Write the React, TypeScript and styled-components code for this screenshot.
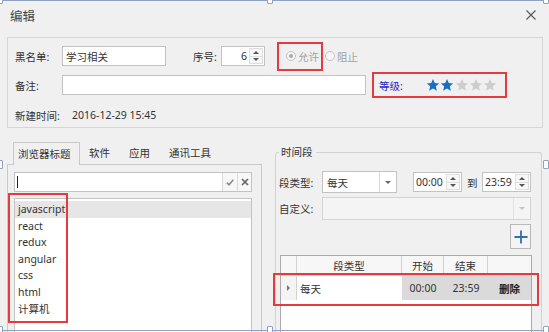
import React from "react";
import styled, { createGlobalStyle } from "styled-components";

const Global = createGlobalStyle`
  html, body { margin: 0; padding: 0; background: #f0f0f0; }
  body {
    font-family: "Noto Sans", "Noto Sans CJK SC", sans-serif;
    font-size: 10.5px;
    color: #333;
  }
  * { box-sizing: border-box; }
`;

const Window = styled.div`
  position: relative;
  width: 549px;
  height: 332px;
  overflow: hidden;
  background: #f0f0f0;
  display: flex;
  flex-direction: column;
`;

const TitleBar = styled.div`
  height: 30px;
  flex-shrink: 0;
  display: flex;
  align-items: center;
  justify-content: space-between;
  padding: 0 13px 0 10px;
`;

const Title = styled.span`
  font-size: 12.5px;
  color: #444;
`;

const TopGroup = styled.div`
  margin: 7px 6px 0 7px;
  height: 91px;
  flex-shrink: 0;
  border: 1px solid #d6d6d6;
  padding: 8px 0 0 7px;
  display: flex;
  flex-direction: column;
`;

const FormRow = styled.div<{ $h: number; $mt?: number }>`
  display: flex;
  align-items: center;
  height: ${(p) => p.$h}px;
  margin-top: ${(p) => p.$mt ?? 0}px;
  flex-shrink: 0;
`;

const Label = styled.span<{ $w: number; $ml?: number; $color?: string }>`
  width: ${(p) => p.$w}px;
  margin-left: ${(p) => p.$ml ?? 0}px;
  flex-shrink: 0;
  white-space: nowrap;
  color: ${(p) => p.$color ?? "#333"};
`;

const TextBox = styled.div<{ $w: number; $h?: number }>`
  width: ${(p) => p.$w}px;
  height: ${(p) => p.$h ?? 20}px;
  flex-shrink: 0;
  border: 1px solid #c3c3c3;
  background: #fff;
  padding: 0 3px;
  display: flex;
  align-items: center;
  white-space: nowrap;
`;

const Spinner = styled.div<{ $w: number; $h: number; $align: "left" | "right"; $ml?: number }>`
  width: ${(p) => p.$w}px;
  height: ${(p) => p.$h}px;
  margin-left: ${(p) => p.$ml ?? 0}px;
  flex-shrink: 0;
  border: 1px solid #c3c3c3;
  background: #fff;
  display: flex;
  align-items: stretch;
`;

const SpinValue = styled.div<{ $align: "left" | "right" }>`
  flex: 1;
  display: flex;
  align-items: center;
  justify-content: ${(p) => (p.$align === "right" ? "flex-end" : "flex-start")};
  padding: 0 2px 0 2px;
`;

const SpinArrows = styled.div`
  width: 14px;
  margin: 1px 1px 1px 0;
  border: 1px solid #dedede;
  background: #f7f7f7;
  display: flex;
  flex-direction: column;
`;

const SpinHalf = styled.div<{ $top?: boolean }>`
  flex: 1;
  display: flex;
  align-items: center;
  justify-content: center;
  border-bottom: ${(p) => (p.$top ? "1px solid #dedede" : "none")};
`;

const Tri = styled.span<{ $dir: "up" | "down" | "right"; $color?: string; $size?: number }>`
  width: 0;
  height: 0;
  ${(p) => {
    const s = p.$size ?? 3;
    const c = p.$color ?? "#555";
    if (p.$dir === "up")
      return `border-left:${s}px solid transparent;border-right:${s}px solid transparent;border-bottom:${s}px solid ${c};`;
    if (p.$dir === "down")
      return `border-left:${s}px solid transparent;border-right:${s}px solid transparent;border-top:${s}px solid ${c};`;
    return `border-top:${s}px solid transparent;border-bottom:${s}px solid transparent;border-left:${s}px solid ${c};`;
  }}
`;

const RedBox = styled.div<{ $w: number; $h: number; $pl: number; $ml?: number }>`
  width: ${(p) => p.$w}px;
  height: ${(p) => p.$h}px;
  margin-left: ${(p) => p.$ml ?? 0}px;
  padding-left: ${(p) => p.$pl}px;
  flex-shrink: 0;
  border: 2px solid #e43b3f;
  display: flex;
  align-items: center;
  white-space: nowrap;
`;

const RadioDot = styled.span<{ $checked?: boolean; $ml?: number }>`
  width: 10px;
  height: 10px;
  margin-left: ${(p) => p.$ml ?? 0}px;
  margin-right: 2px;
  flex-shrink: 0;
  border-radius: 50%;
  border: 1px solid #c4c4c4;
  background: #f6f6f6;
  display: flex;
  align-items: center;
  justify-content: center;
  &::after {
    content: "";
    width: 4px;
    height: 4px;
    border-radius: 50%;
    background: ${(p) => (p.$checked ? "#a8a8a8" : "transparent")};
  }
`;

const RadioText = styled.span`
  color: #a2a2a2;
  white-space: nowrap;
`;

const Stars = styled.div`
  display: flex;
  gap: 0.3px;
`;

const BottomArea = styled.div`
  display: flex;
  margin-top: 14px;
  padding-left: 7px;
  flex: 1;
  min-height: 0;
`;

const LeftPane = styled.div`
  width: 255px;
  flex-shrink: 0;
  display: flex;
  flex-direction: column;
`;

const TabStrip = styled.div`
  display: flex;
  align-items: flex-start;
  height: 22px;
  flex-shrink: 0;
`;

const Tab = styled.div<{ $active?: boolean }>`
  position: relative;
  z-index: 1;
  white-space: nowrap;
  ${(p) =>
    p.$active
      ? `
    margin-left: 6px;
    width: 67px;
    height: 23px;
    line-height: 22px;
    padding-left: 4px;
    border: 1px solid #c9c9c9;
    border-bottom: none;
    background: #f0f0f0;
  `
      : `
    height: 22px;
    line-height: 22px;
    padding: 0 10px 0 9px;
  `}
`;

const TabPanel = styled.div`
  flex: 1;
  min-height: 0;
  border: 1px solid #c9c9c9;
  border-bottom: none;
  padding: 7px 9px 0 6px;
  display: flex;
  flex-direction: column;
`;

const SearchBox = styled.div`
  height: 20px;
  flex-shrink: 0;
  border: 1px solid #c3c3c3;
  background: #fff;
  display: flex;
  align-items: stretch;
`;

const Caret = styled.span`
  width: 1px;
  height: 12px;
  background: #222;
  margin: auto 0 auto 2px;
`;

const Spacer = styled.div`
  flex: 1;
`;

const SearchBtn = styled.div<{ $w: number }>`
  width: ${(p) => p.$w}px;
  border-left: 1px solid #dadada;
  background: #f7f7f7;
  display: flex;
  align-items: center;
  justify-content: center;
`;

const ListBox = styled.div`
  margin-top: 6px;
  flex: 1;
  border: 1px solid #c3c3c3;
  border-bottom: none;
  background: #fff;
  padding-top: 2px;
`;

const ListItem = styled.div<{ $sel?: boolean }>`
  height: 16.6px;
  line-height: 16.6px;
  padding-left: 3px;
  background: ${(p) => (p.$sel ? "#e6e6e6" : "transparent")};
  white-space: nowrap;
`;

const GroupBox = styled.fieldset`
  margin: 3px 0 0 13px;
  width: 267px;
  flex-shrink: 0;
  border: 1px solid #d2d2d2;
  border-bottom: none;
  border-radius: 3px 3px 0 0;
  padding: 12px 10px 0 3px;
  display: flex;
  flex-direction: column;
  min-width: 0;
`;

const GroupLegend = styled.legend`
  padding: 0 3px 0 2px;
  line-height: 14px;
  margin: 0;
`;

const Combo = styled.div<{ $w: number; $h: number; $disabled?: boolean }>`
  width: ${(p) => p.$w}px;
  height: ${(p) => p.$h}px;
  flex-shrink: 0;
  border: 1px solid ${(p) => (p.$disabled ? "#d4d4d4" : "#c3c3c3")};
  background: ${(p) => (p.$disabled ? "#f4f4f4" : "#fff")};
  display: flex;
  align-items: stretch;
`;

const ComboValue = styled.div`
  flex: 1;
  display: flex;
  align-items: center;
  padding-left: 4px;
`;

const ComboArrow = styled.div<{ $disabled?: boolean }>`
  width: 17px;
  border-left: 1px solid ${(p) => (p.$disabled ? "#e2e2e2" : "#d6d6d6")};
  display: flex;
  align-items: center;
  justify-content: center;
`;

const PlusButton = styled.div`
  align-self: flex-end;
  margin-top: 4px;
  width: 21px;
  height: 25px;
  flex-shrink: 0;
  border: 1px solid #b8b8b8;
  background: #f4f4f4;
  display: flex;
  align-items: center;
  justify-content: center;
`;

const Table = styled.div`
  margin: 6px 0 0 1px;
  width: 252px;
  flex: 1;
  border: 1px solid #aaaaaa;
  border-bottom: none;
  background: #fff;
  display: flex;
  flex-direction: column;
`;

const GridRow = styled.div<{ $h: number }>`
  display: grid;
  grid-template-columns: 16px 105px 42px 44px 1fr;
  height: ${(p) => p.$h}px;
  flex-shrink: 0;
`;

const HeadCell = styled.div<{ $last?: boolean }>`
  background: #f7f7f7;
  border-bottom: 1px solid #d2d2d2;
  border-right: ${(p) => (p.$last ? "none" : "1px solid #d2d2d2")};
  display: flex;
  align-items: center;
  justify-content: center;
  white-space: nowrap;
`;

const DataCell = styled.div<{ $kind: "rowhead" | "edit" | "ro" }>`
  display: flex;
  align-items: center;
  white-space: nowrap;
  ${(p) =>
    p.$kind === "rowhead"
      ? "background:#f4f4f4;border-right:1px solid #d2d2d2;justify-content:center;"
      : p.$kind === "edit"
      ? "background:#fff;padding-left:3px;"
      : "background:#dadada;justify-content:center;"}
`;

const DeleteText = styled.span`
  color: #222;
  font-weight: 600;
`;

const Annotation = styled.div<{ $x: number; $y: number; $w: number; $h: number }>`
  position: absolute;
  left: ${(p) => p.$x}px;
  top: ${(p) => p.$y}px;
  width: ${(p) => p.$w}px;
  height: ${(p) => p.$h}px;
  border: 2px solid #e43b3f;
  pointer-events: none;
`;

const FrameLine = styled.div<{ $y: number }>`
  position: absolute;
  left: 0;
  right: 0;
  top: ${(p) => p.$y}px;
  height: 1px;
  background: #8ea3bf;
  pointer-events: none;
`;

const Handle = styled.div<{ $x: number; $y: number }>`
  position: absolute;
  left: ${(p) => p.$x}px;
  top: ${(p) => p.$y}px;
  width: 6px;
  height: 9px;
  border: 1px solid #8ea3bf;
  border-radius: 1px;
  background: #fff;
  pointer-events: none;
`;

const Star: React.FC<{ on: boolean }> = ({ on }) => (
  <svg width="14" height="14" viewBox="0 0 24 24">
    <path
      d="M12 1.5l3 7.2 7.6.6-5.8 5 1.8 7.5L12 17.8l-6.6 4 1.8-7.5-5.8-5 7.6-.6z"
      fill={on ? "#1a6ec6" : "#cdcdcd"}
    />
  </svg>
);

const SpinArrowBox: React.FC = () => (
  <SpinArrows>
    <SpinHalf $top>
      <Tri $dir="up" $size={3} />
    </SpinHalf>
    <SpinHalf>
      <Tri $dir="down" $size={3} />
    </SpinHalf>
  </SpinArrows>
);

const items = ["javascript", "react", "redux", "angular", "css", "html", "计算机"];

export default function App() {
  return (
    <>
      <Global />
      <Window>
        <TitleBar>
          <Title>编辑</Title>
          <svg width="10" height="10" viewBox="0 0 10 10">
            <path d="M0.5 0.5L9.5 9.5M9.5 0.5L0.5 9.5" stroke="#555" strokeWidth="1.1" />
          </svg>
        </TitleBar>

        <TopGroup>
          <FormRow $h={20}>
            <Label $w={47}>黑名单:</Label>
            <TextBox $w={104}>学习相关</TextBox>
            <Label $w={28} $ml={27}>序号:</Label>
            <Spinner $w={44} $h={20} $align="right">
              <SpinValue $align="right">6</SpinValue>
              <SpinArrowBox />
            </Spinner>
            <RedBox $w={46} $h={29} $pl={7} $ml={12}>
              <RadioDot $checked />
              <RadioText>允许</RadioText>
            </RedBox>
            <RadioDot $ml={2} />
            <RadioText>阻止</RadioText>
          </FormRow>
          <FormRow $h={20} $mt={9}>
            <Label $w={47}>备注:</Label>
            <TextBox $w={304} />
            <RedBox $w={135} $h={26} $pl={5} $ml={6}>
              <Label $w={47} $color="#2525c9">等级:</Label>
              <Stars>
                {[0, 1, 2, 3, 4].map((i) => (
                  <Star key={i} on={i < 2} />
                ))}
              </Stars>
            </RedBox>
          </FormRow>
          <FormRow $h={20} $mt={10}>
            <Label $w={57}>新建时间:</Label>
            <span>2016-12-29 15:45</span>
          </FormRow>
        </TopGroup>

        <BottomArea>
          <LeftPane>
            <TabStrip>
              <Tab $active>浏览器标题</Tab>
              <Tab>软件</Tab>
              <Tab>应用</Tab>
              <Tab>通讯工具</Tab>
            </TabStrip>
            <TabPanel>
              <SearchBox>
                <Caret />
                <Spacer />
                <SearchBtn $w={15}>
                  <svg width="8" height="7" viewBox="0 0 8 7">
                    <path d="M0.8 3.6L3 5.8L7.3 0.8" stroke="#8a8a8a" strokeWidth="1.6" fill="none" />
                  </svg>
                </SearchBtn>
                <SearchBtn $w={14}>
                  <svg width="8" height="8" viewBox="0 0 8 8">
                    <path d="M1 1L7 7M7 1L1 7" stroke="#666" strokeWidth="1.7" />
                  </svg>
                </SearchBtn>
              </SearchBox>
              <ListBox>
                {items.map((t, i) => (
                  <ListItem key={t} $sel={i === 0}>
                    {t}
                  </ListItem>
                ))}
              </ListBox>
            </TabPanel>
          </LeftPane>

          <GroupBox>
            <GroupLegend>时间段</GroupLegend>
            <FormRow $h={22}>
              <Label $w={43}>段类型:</Label>
              <Combo $w={75} $h={22}>
                <ComboValue>每天</ComboValue>
                <ComboArrow>
                  <Tri $dir="down" $size={3} $color="#666" />
                </ComboArrow>
              </Combo>
              <Spinner $w={49} $h={20} $align="left" $ml={16}>
                <SpinValue $align="left">00:00</SpinValue>
                <SpinArrowBox />
              </Spinner>
              <Label $w={15} $ml={5}>到</Label>
              <Spinner $w={49} $h={20} $align="left">
                <SpinValue $align="left">23:59</SpinValue>
                <SpinArrowBox />
              </Spinner>
            </FormRow>
            <FormRow $h={23} $mt={4}>
              <Label $w={43}>自定义:</Label>
              <Combo $w={209} $h={23} $disabled>
                <ComboValue />
                <ComboArrow $disabled>
                  <Tri $dir="down" $size={3} $color="#c4c4c4" />
                </ComboArrow>
              </Combo>
            </FormRow>
            <PlusButton>
              <svg width="14" height="14" viewBox="0 0 14 14">
                <path d="M7 0.5V13.5M0.5 7H13.5" stroke="#2f6fb7" strokeWidth="1.8" />
              </svg>
            </PlusButton>
            <Table>
              <GridRow $h={20}>
                <HeadCell />
                <HeadCell>段类型</HeadCell>
                <HeadCell>开始</HeadCell>
                <HeadCell>结束</HeadCell>
                <HeadCell $last />
              </GridRow>
              <GridRow $h={24}>
                <DataCell $kind="rowhead">
                  <Tri $dir="right" $size={3} $color="#777" />
                </DataCell>
                <DataCell $kind="edit">每天</DataCell>
                <DataCell $kind="ro">00:00</DataCell>
                <DataCell $kind="ro">23:59</DataCell>
                <DataCell $kind="ro">
                  <DeleteText>删除</DeleteText>
                </DataCell>
              </GridRow>
            </Table>
          </GroupBox>
        </BottomArea>

        <Annotation $x={8} $y={193} $w={60} $h={130} />
        <Annotation $x={273} $y={273} $w={266} $h={33} />

        <FrameLine $y={0} />
        <FrameLine $y={330} />
        <Handle $x={-3} $y={-5} />
        <Handle $x={267} $y={-5} />
        <Handle $x={543} $y={-5} />
        <Handle $x={-3} $y={160} />
        <Handle $x={543} $y={160} />
        <Handle $x={-3} $y={326} />
        <Handle $x={267} $y={326} />
        <Handle $x={543} $y={326} />
      </Window>
    </>
  );
}
